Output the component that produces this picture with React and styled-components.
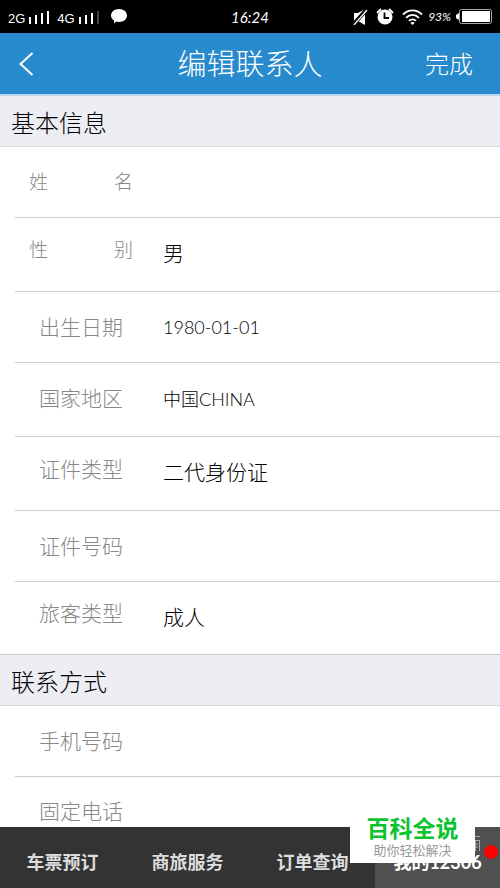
import React, { useState } from 'react'
import styled, { createGlobalStyle } from 'styled-components'

const basicFields = [
  { id: 'name', label: '姓名', value: '', spread: true },
  { id: 'gender', label: '性别', value: '男', spread: true, options: ['男', '女'] },
  { id: 'birthday', label: '出生日期', value: '1980-01-01', latin: true },
  { id: 'country', label: '国家地区', value: '中国CHINA', latin: true, tall: true },
  { id: 'idType', label: '证件类型', value: '二代身份证', options: ['二代身份证', '护照'] },
  { id: 'idNumber', label: '证件号码', value: '' },
  { id: 'passengerType', label: '旅客类型', value: '成人', options: ['成人', '儿童', '学生'] }
]

const contactFields = [
  { id: 'mobile', label: '手机号码', value: '' },
  { id: 'phone', label: '固定电话', value: '' }
]

const tabs = ['车票预订', '商旅服务', '订单查询', '我的12306']

const Fields = ({ fields }) => {
  const [values, setValues] = useState(
    Object.fromEntries(fields.map(field => [field.id, field.value]))
  )

  const handleChange = e => {
    setValues({ ...values, [e.target.id]: e.target.value })
  }

  return (
    <FieldList>
      {fields.map(field => (
        <Row key={field.id} $tall={field.tall || field.options}>
          <Label htmlFor={field.id} $spread={field.spread} $raised={field.options}>
            {field.spread
              ? field.label.split('').map(char => <span key={char}>{char}</span>)
              : field.label}
          </Label>
          {field.options ? (
            <Select id={field.id} value={values[field.id]} onChange={handleChange}>
              {field.options.map(option => (
                <option key={option}>{option}</option>
              ))}
            </Select>
          ) : (
            <Input
              id={field.id}
              $latin={field.latin}
              value={values[field.id]}
              onChange={handleChange}
            />
          )}
        </Row>
      ))}
    </FieldList>
  )
}

const Signal = ({ bars }) => (
  <svg width="20" height="16" viewBox="0 0 20 16" aria-hidden="true">
    {[0, 1, 2, 3].map(i => (
      <rect
        key={i}
        x={i * 6}
        y={8 - i * 2}
        width="2"
        height={7 + i * 2}
        fill={i < bars ? '#fff' : '#444'}
      />
    ))}
  </svg>
)

const StatusIcons = () => (
  <>
    {/* muted speaker */}
    <svg width="15" height="16" viewBox="0 0 15 16" aria-hidden="true">
      <path d="M1 4h4l7-4v16l-7-4H1z" fill="#fff" />
      <path d="M0 16 14 0" stroke="#000" strokeWidth="4" />
      <path d="M1 16 14 1" stroke="#fff" strokeWidth="1.3" />
    </svg>
    {/* alarm clock */}
    <svg width="18" height="17" viewBox="0 0 18 17" aria-hidden="true">
      <circle cx="9" cy="9" r="7.5" fill="#fff" />
      <path d="M1 5 5 1M17 5l-4-4" stroke="#fff" strokeWidth="1.8" />
      <path d="M8.5 4.5V10H13" fill="none" stroke="#000" strokeWidth="1.8" />
    </svg>
    {/* wifi */}
    <svg width="21" height="16" viewBox="0 0 21 16" aria-hidden="true">
      <g fill="none" stroke="#fff" strokeWidth="1.8">
        <path d="M1 5.500c5.500-5.500 13.500-5.500 19 0" />
        <path d="M4 8.800c3.800-3.800 9.200-3.800 13 0" />
        <path d="M7 11.800c2-2 5-2 7 0" />
      </g>
      <path d="m10.500 16-2.200-2.200c1.200-1.200 3.200-1.200 4.400 0z" fill="#fff" />
    </svg>
  </>
)

const App = () => {
  const [activeTab, setActiveTab] = useState('我的12306')

  return (
    <Page>
      <GlobalStyle />
      <StatusBar>
        <StatusGroup>
          <Network>2G</Network>
          <Signal bars={4} />
          <Network $second>4G</Network>
          <Signal bars={3} />
          <Bubble width="16" height="15" viewBox="0 0 16 15" aria-hidden="true">
            <path d="M8 0c4.400 0 8 2.800 8 6.500S12.400 13 8 13c-1 0-2-.1-2.800-.4L3 14.500v-3C1.200 10.300 0 8.500 0 6.500 0 2.800 3.600 0 8 0z" fill="#fff" />
          </Bubble>
        </StatusGroup>
        <Clock>16:24</Clock>
        <StatusGroup $end>
          <StatusIcons />
          <Percent>93%</Percent>
          <svg width="36" height="15" viewBox="0 0 36 15" aria-hidden="true">
            <rect x="3.500" y=".5" width="32" height="14" rx="2" fill="none" stroke="#aaa" />
            <rect x="6" y="2" width="28" height="11" fill="#fff" />
            <path d="M3 4v7L0 9V6z" fill="#fff" />
          </svg>
        </StatusGroup>
      </StatusBar>

      <Header>
        <BackButton aria-label="返回">
          <svg width="15" height="24" viewBox="0 0 15 24" aria-hidden="true">
            <path d="M13.500 1 1.500 12l12 11" fill="none" stroke="#fff" strokeWidth="2" />
          </svg>
        </BackButton>
        <Title>编辑联系人</Title>
        <DoneButton>完成</DoneButton>
      </Header>

      <Content>
        <SectionTitle>基本信息</SectionTitle>
        <Fields fields={basicFields} />
        <SectionTitle $divided>联系方式</SectionTitle>
        <Fields fields={contactFields} />
      </Content>

      <TabBar>
        {tabs.map(tab => (
          <Tab key={tab} $active={tab === activeTab} onClick={() => setActiveTab(tab)}>
            {tab}
          </Tab>
        ))}
        <TabIcon width="8" height="18" viewBox="0 0 8 18" aria-hidden="true">
          <path d="M0 2.500h7M0 6.500h7M6.500 6v11M3 10h2M3 13h2M2.500 6v11" fill="none" stroke="#aaa" />
        </TabIcon>
        <Badge />
        <Watermark>
          <Brand>百科全说</Brand>
          <Slogan>助你轻松解决</Slogan>
        </Watermark>
      </TabBar>
    </Page>
  )
}

export default App

const GlobalStyle = createGlobalStyle`
  * {
    box-sizing: border-box;
  }
  body {
    margin: 0;
    background: #fff;
  }
  body, button, input, select {
    font-family: Lato, "Noto Sans CJK SC", sans-serif;
  }
`

const Page = styled.div`
  height: 100vh;
  display: flex;
  flex-direction: column;
`

const StatusBar = styled.div`
  flex: none;
  height: 33px;
  padding: 0 8px;
  display: grid;
  grid-template-columns: 1fr auto 1fr;
  align-items: center;
  background: #000;
  color: #fff;
`

const StatusGroup = styled.div`
  display: flex;
  align-items: center;
  gap: ${props => props.$end ? '8px' : '4px'};
  justify-content: ${props => props.$end ? 'flex-end' : 'flex-start'};
`

const Network = styled.span`
  font-family: "Liberation Sans", sans-serif;
  font-size: 13px;
  line-height: 16px;
  padding-top: 4px;
  margin-left: ${props => props.$second ? '4px' : '0'};
`

const Bubble = styled.svg`
  margin-left: 8px;
`

const Clock = styled.span`
  font-size: 15px;
  font-style: italic;
`

const Percent = styled.span`
  font-size: 12px;
  font-style: italic;
  margin: 0 -3px;
`

const Header = styled.header`
  flex: none;
  height: 63px;
  display: grid;
  grid-template-columns: 1fr auto 1fr;
  align-items: center;
  background: #278acd;
  border-bottom: 2px solid #b9d9ee;
  color: #fff;
`

const HeaderButton = styled.button`
  border: none;
  background: none;
  color: #fff;
  cursor: pointer;
  display: flex;
  align-items: center;
`

const BackButton = styled(HeaderButton)`
  justify-self: start;
  padding: 12px 19px;
`

const DoneButton = styled(HeaderButton)`
  justify-self: end;
  padding: 0 27px;
  font-size: 24px;
  font-weight: 300;
  line-height: 60px;
`

const Title = styled.h1`
  margin: 0;
  font-size: 29px;
  font-weight: 300;
  line-height: 60px;
`

const Content = styled.main`
  flex: 1;
  min-height: 0;
  overflow: hidden;
`

const SectionTitle = styled.h2`
  margin: 0;
  height: ${props => props.$divided ? '52px' : '51px'};
  padding: 0 11px;
  background: #edeef3;
  border-bottom: 1px solid #d6d6d8;
  ${props => props.$divided && 'border-top: 1px solid #c8c8c8;'}
  font-size: 24px;
  font-weight: 300;
  line-height: 54px;
`

const FieldList = styled.div`
  padding-left: 15px;
`

const Row = styled.div`
  box-sizing: content-box;
  height: ${props => props.$tall ? '69px' : '70px'};
  padding-bottom: ${props => props.$tall ? '4px' : '0'};
  display: flex;
  align-items: center;
  border-bottom: 1px solid #ccc;

  &:last-child {
    border-bottom: none;
    height: 68px;
  }
`

const Label = styled.label`
  width: ${props => props.$spread ? '104px' : '84px'};
  margin-left: ${props => props.$spread ? '14px' : '24px'};
  margin-right: ${props => props.$spread ? '30px' : '40px'};
  padding-bottom: ${props => props.$raised ? '6px' : '0'};
  display: flex;
  justify-content: space-between;
  color: #888;
  font-size: ${props => props.$spread ? '19px' : '21px'};
  font-weight: 300;
  line-height: 30px;
`

const Input = styled.input`
  flex: 1;
  min-width: 0;
  height: 40px;
  padding: 0;
  border: none;
  outline: none;
  background: none;
  color: #000;
  font-size: ${props => props.$latin ? '18px' : '21px'};
  font-weight: 300;
`

const Select = styled.select`
  flex: 1;
  min-width: 0;
  height: 40px;
  padding: 0;
  appearance: none;
  border: none;
  outline: none;
  background: none;
  color: #000;
  font-size: 21px;
  font-weight: 300;
`

const TabBar = styled.nav`
  position: relative;
  flex: none;
  height: 61px;
  display: flex;
  background: #333;
`

const Tab = styled.button`
  flex: 1;
  padding: 6px 0 0;
  border: none;
  background: ${props => props.$active ? '#505050' : 'none'};
  color: ${props => props.$active ? '#fff' : '#ddd'};
  font-size: 18px;
  font-weight: bold;
  cursor: pointer;
`

// only its right edge shows beside the watermark
const TabIcon = styled.svg`
  position: absolute;
  right: 19px;
  top: 7px;
`

const Badge = styled.span`
  position: absolute;
  right: 2px;
  top: 18px;
  width: 14px;
  height: 14px;
  border-radius: 50%;
  background: #f00;
`

// overlaps the tab bar and the bottom of the form
const Watermark = styled.div`
  position: absolute;
  right: 25px;
  bottom: 25px;
  width: 125px;
  height: 54px;
  padding-top: 5px;
  background: #fff;
  text-align: center;
`

const Brand = styled.div`
  color: #0cc22e;
  font-size: 23px;
  font-weight: bold;
  line-height: 28px;
`

const Slogan = styled.div`
  color: #999;
  font-size: 13px;
  line-height: 16px;
`
